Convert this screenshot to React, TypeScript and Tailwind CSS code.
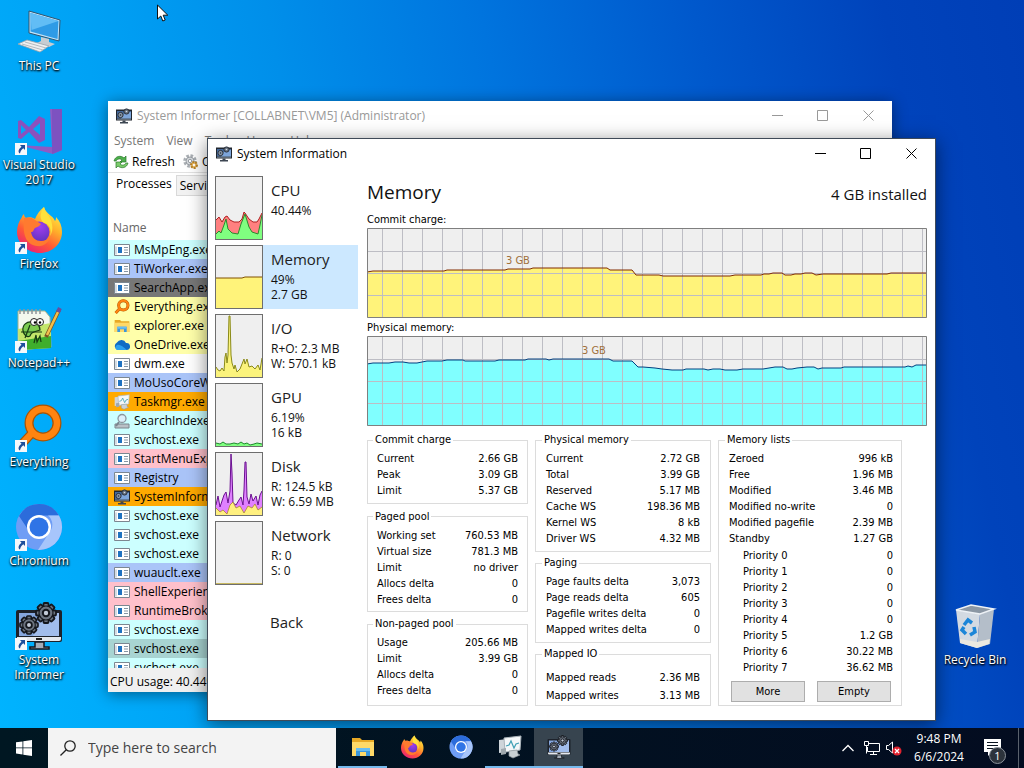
import type { ReactNode } from "react";

type Row = [label: string, value: string];

const PROCESSES = [
  { name: "MsMpEng.exe", bg: "bg-[#ccffff]", icon: "app" },
  { name: "TiWorker.exe", bg: "bg-[#aac4f8]", icon: "app" },
  { name: "SearchApp.exe", bg: "bg-[#777777]", icon: "app" },
  { name: "Everything.exe", bg: "bg-[#ffffaa]", icon: "everything" },
  { name: "explorer.exe", bg: "bg-[#ffffaa]", icon: "explorer" },
  { name: "OneDrive.exe", bg: "bg-[#ffffaa]", icon: "onedrive" },
  { name: "dwm.exe", bg: "bg-white", icon: "app" },
  { name: "MoUsoCoreWorker.exe", bg: "bg-[#aac4f8]", icon: "app" },
  { name: "Taskmgr.exe", bg: "bg-[#ffaa00]", icon: "taskmgr" },
  { name: "SearchIndexer.exe", bg: "bg-[#ccffff]", icon: "indexer" },
  { name: "svchost.exe", bg: "bg-[#ccffff]", icon: "app" },
  { name: "StartMenuExperience.exe", bg: "bg-[#ffc0cb]", icon: "app" },
  { name: "Registry", bg: "bg-[#aac4f8]", icon: "app" },
  { name: "SystemInformer.exe", bg: "bg-[#ffaa00]", icon: "informer" },
  { name: "svchost.exe", bg: "bg-[#ccffff]", icon: "app" },
  { name: "svchost.exe", bg: "bg-[#ccffff]", icon: "app" },
  { name: "svchost.exe", bg: "bg-[#ccffff]", icon: "app" },
  { name: "wuauclt.exe", bg: "bg-[#aac4f8]", icon: "app" },
  { name: "ShellExperienceHost.exe", bg: "bg-[#ffc0cb]", icon: "app" },
  { name: "RuntimeBroker.exe", bg: "bg-[#ffc0cb]", icon: "app" },
  { name: "svchost.exe", bg: "bg-[#ccffff]", icon: "app" },
  { name: "svchost.exe", bg: "bg-[#a8d4d2]", icon: "app" },
  { name: "svchost.exe", bg: "bg-[#ccffff]", icon: "app" },
];

const COMMIT: Row[] = [
  ["Current", "2.66 GB"],
  ["Peak", "3.09 GB"],
  ["Limit", "5.37 GB"],
];
const PAGED: Row[] = [
  ["Working set", "760.53 MB"],
  ["Virtual size", "781.3 MB"],
  ["Limit", "no driver"],
  ["Allocs delta", "0"],
  ["Frees delta", "0"],
];
const NON_PAGED: Row[] = [
  ["Usage", "205.66 MB"],
  ["Limit", "3.99 GB"],
  ["Allocs delta", "0"],
  ["Frees delta", "0"],
];
const PHYSICAL: Row[] = [
  ["Current", "2.72 GB"],
  ["Total", "3.99 GB"],
  ["Reserved", "5.17 MB"],
  ["Cache WS", "198.36 MB"],
  ["Kernel WS", "8 kB"],
  ["Driver WS", "4.32 MB"],
];
const PAGING: Row[] = [
  ["Page faults delta", "3,073"],
  ["Page reads delta", "605"],
  ["Pagefile writes delta", "0"],
  ["Mapped writes delta", "0"],
];
const MAPPED: Row[] = [
  ["Mapped reads", "2.36 MB"],
  ["Mapped writes", "3.13 MB"],
];
const LISTS: Row[] = [
  ["Zeroed", "996 kB"],
  ["Free", "1.96 MB"],
  ["Modified", "3.46 MB"],
  ["Modified no-write", "0"],
  ["Modified pagefile", "2.39 MB"],
  ["Standby", "1.27 GB"],
];
const PRIORITIES: Row[] = [
  ["Priority 0", "0"],
  ["Priority 1", "0"],
  ["Priority 2", "0"],
  ["Priority 3", "0"],
  ["Priority 4", "0"],
  ["Priority 5", "1.2 GB"],
  ["Priority 6", "30.22 MB"],
  ["Priority 7", "36.62 MB"],
];

const COMMIT_LINE =
  "0,44 6,43 77,43 80,42 138,42 141,41 163,41 166,40 240,40 243,42 265,42 269,47 292,47 296,48 363,48 368,47 394,47 397,46 402,46 406,45 415,45 418,47 424,47 428,46 434,46 438,45 445,45 449,47 456,46 520,46 524,45 560,45";
const PHYSICAL_LINE =
  "0,28 6,27 22,27 28,26 36,26 42,27 50,27 60,25 75,25 80,24 96,24 98,25 128,25 132,24 158,24 161,23 179,23 182,24 186,23 242,23 246,25 265,25 271,31 276,31 288,32 295,33 305,34 316,34 319,33 337,33 341,34 346,33 353,33 358,34 370,34 376,33 396,33 402,32 408,31 416,31 420,33 425,33 430,32 440,31 447,31 451,33 455,32 474,32 477,31 538,31 541,30 545,31 549,29 560,29";

function Gear({ x, y, r }: { x: number; y: number; r: number }) {
  return (
    <g transform={`translate(${x} ${y}) scale(${r / 10})`}>
      {[0, 45, 90, 135].map((a) => (
        <rect key={a} x="-2.500" y="-10" width="5" height="20" rx="1" fill="#6c7480" stroke="#14171d" strokeWidth="1.800" transform={`rotate(${a})`} />
      ))}
      <circle r="7" fill="#6c7480" stroke="#14171d" strokeWidth="1.200" />
      <circle r="3.200" fill="#c3cbd8" stroke="#14171d" strokeWidth="2" />
    </g>
  );
}

function SystemInformerIcon({ className }: { className?: string }) {
  return (
    <svg className={className} viewBox="0 0 48 48" aria-hidden="true">
      <path d="M20 40h9v5h5v2H15v-2h5z" fill="#a5adb8" stroke="#14181f" strokeWidth="1.500" />
      <rect x="1" y="8" width="46" height="32" rx="2" fill="#1d222b" />
      <rect x="4" y="11" width="40" height="23" fill="#86a7de" />
      <path d="M30 11h14v23H18z" fill="#a1bdec" />
      <path d="M2 35h44v2a2 2 0 0 1-2 2H4a2 2 0 0 1-2-2z" fill="#e4e8ee" />
      <path d="M21 37h6" stroke="#222" strokeWidth="2" />
      <Gear x={14} y={23} r={9} />
      <Gear x={31} y={11} r={10} />
    </svg>
  );
}

// simplified drawing used in title bars and list rows
function SystemInformerSmallIcon({ className }: { className?: string }) {
  return (
    <svg className={className} viewBox="0 0 16 16" aria-hidden="true">
      <path d="M0 1.500h16v11H0z" fill="#20262f" />
      <path d="M1 3h14v7.500H1z" fill="#466a9c" />
      <path d="M9 4h6v6.500H5z" fill="#7da5da" />
      <path d="M1 11.200h14" stroke="#7c8894" />
      <path d="M6.500 12.500h3V14H12v1.500H4V14h2.500z" fill="#3d4652" />
      <circle cx="4.500" cy="7" r="2.600" fill="#8d9bad" stroke="#2a313c" />
      <circle cx="4.500" cy="7" r="0.800" fill="#222a34" />
      <circle cx="10.500" cy="3.500" r="2.600" fill="#66717f" stroke="#2a313c" />
      <circle cx="10.500" cy="3.500" r="0.800" fill="#d4dbe4" />
    </svg>
  );
}

function FirefoxIcon({ className }: { className?: string }) {
  return (
    <svg className={className} viewBox="0 0 48 48" aria-hidden="true">
      <defs>
        <linearGradient id="fx-body" x1="0.800" y1="0" x2="0.200" y2="1">
          <stop offset="0" stopColor="#fff14a" />
          <stop offset="0.350" stopColor="#ffb02a" />
          <stop offset="0.650" stopColor="#ff5a36" />
          <stop offset="1" stopColor="#e8197e" />
        </linearGradient>
        <radialGradient id="fx-core" cx="0.550" cy="0.250" r="0.800">
          <stop offset="0" stopColor="#a03cf0" />
          <stop offset="1" stopColor="#5b33b8" />
        </radialGradient>
      </defs>
      <path
        d="M29 1c1 4 4 6 7 9 2 1 3 3 4 5 1-1 1-3 1-4 4 4 6 9 6 15 0 12-10 21-22 21S2 38 2 26c0-6 2-11 5-15 0-1 1-2 2-3 0 2 1 3 2 4 3-1 6-1 9 1 2-5 5-9 9-12z"
        fill="url(#fx-body)"
      />
      <circle cx="24" cy="26" r="10.500" fill="url(#fx-core)" />
      <path d="M9 12c4-1 8-1 11 2l6 4c-1 2-4 3-6 4-2 2-1 4-4 4 1 6 5 9 10 9 4 0 6-2 9-3-2 5-7 9-13 8C13 39 7 32 9 12z" fill="#ff7a2f" />
      <path d="M29 1c1 7 7 9 8 17 1 5 0 9-2 12 2-7-1-12-6-13-5-4-4-10 0-16z" fill="#ffe13c" />
    </svg>
  );
}

function ChromiumIcon({ className }: { className?: string }) {
  return (
    <svg className={className} viewBox="0 0 48 48" aria-hidden="true">
      <circle cx="24" cy="24" r="23" fill="#6f9df5" />
      <path d="M4 13A23 23 0 0 1 44 12.500H24a12 12 0 0 0-11 14z" fill="#2c6cdb" />
      <path d="M44 12.500A23 23 0 0 1 23 47l11-17a12 12 0 0 0-1-17.500z" fill="#a7c5fb" />
      <circle cx="24" cy="24" r="12" fill="#fff" />
      <circle cx="24" cy="24" r="9.500" fill="#2f74e6" />
    </svg>
  );
}

function EverythingIcon({ className }: { className?: string }) {
  return (
    <svg className={className} viewBox="0 0 48 48" aria-hidden="true">
      <path d="m18 28-13 14" stroke="#a85405" strokeWidth="9" />
      <circle cx="28" cy="19" r="14" fill="none" stroke="#a85405" strokeWidth="9" />
      <path d="m18 28-13 14" stroke="#ff8410" strokeWidth="6.500" />
      <circle cx="28" cy="19" r="14" fill="none" stroke="#ff8410" strokeWidth="6.500" />
    </svg>
  );
}

function FolderIcon({ className }: { className?: string }) {
  return (
    <svg className={className} viewBox="0 0 24 24" aria-hidden="true">
      <path d="M1 3h8l2 2h12v16H1z" fill="#e8a925" />
      <path d="M1 7h22v14H1z" fill="#ffd968" />
      <path d="M5 21v-8h14v8h-4v-4H9v4z" fill="#3b97dc" />
      <path d="M5 13h14v3H5z" fill="#68bdf2" />
    </svg>
  );
}

function TaskManagerIcon({ className }: { className?: string }) {
  return (
    <svg className={className} viewBox="0 0 24 24" aria-hidden="true">
      <path d="M1 5 17 3v13L1 18z" fill="#cfd5da" />
      <path d="m6 3 17-2-1 14-15 2z" fill="#f4f7f9" stroke="#aab3ba" />
      <path d="m8 11 3-1 2-4 3 7 2-4 3-1" fill="none" stroke="#3f9fb4" strokeWidth="1.200" />
      <path d="m11 16 8-1 1 4 2 1-7 3-4-2z" fill="#c9d0d5" stroke="#8e979e" strokeWidth="0.700" />
      <path d="m3 14 5-1v6l-5 1z" fill="#9fa8ae" />
    </svg>
  );
}

function ProcessIcon({ kind }: { kind: string }) {
  const cls = "size-4 shrink-0";
  if (kind === "everything") return <EverythingIcon className={cls} />;
  if (kind === "explorer") return <FolderIcon className={cls} />;
  if (kind === "taskmgr") return <TaskManagerIcon className={cls} />;
  if (kind === "informer") return <SystemInformerSmallIcon className={cls} />;
  if (kind === "onedrive") {
    return (
      <svg className={cls} viewBox="0 0 16 16" aria-hidden="true">
        <path d="M4 13a4 4 0 0 1-1-7.500A5 5 0 0 1 12 6a3.500 3.500 0 0 1 1 7z" fill="#0f6cc4" />
        <path d="M3 13c-2-1-2-4 0-5 3-1 6 2 10 5z" fill="#2ba0ee" />
      </svg>
    );
  }
  if (kind === "indexer") {
    return (
      <svg className={cls} viewBox="0 0 16 16" aria-hidden="true">
        <path d="M1 11h14v4H1z" fill="#b9c0c6" stroke="#7d868d" />
        <path d="m5 9-3 4" stroke="#7a858e" strokeWidth="2" />
        <circle cx="8" cy="5.500" r="4" fill="#dceffa" stroke="#8b969f" strokeWidth="1.300" />
      </svg>
    );
  }
  return (
    <svg className={cls} viewBox="0 0 16 16" aria-hidden="true">
      <path d="M0.500 2.500h15v11h-15z" fill="#fff" stroke="#7c8791" />
      <path d="M1 4.500h2v8H1z" fill="#d5dce2" />
      <path d="M4 5h4v6H4z" fill="#1f72c0" />
      <path d="M10 5.500h4M10 8h4M10 10.500h4" stroke="#8595a5" />
    </svg>
  );
}

function ThisPcIcon() {
  return (
    <svg className="size-12" viewBox="0 0 48 48" aria-hidden="true">
      <path d="m14 3 31 9-1 21-30-8z" fill="#bfe4fa" stroke="#30536e" />
      <path d="m15.500 5 28 8-1 18-27-7.500z" fill="#2e9be6" />
      <path d="m15.500 5 28 8-27 9z" fill="#62bdf5" />
      <path d="m26 29 8 2v3l6 2-6 3-12-4 4-2z" fill="#c7cdd2" />
      <path d="m3 36 9-4 22 6-9 6z" fill="#eef0f1" stroke="#9aa3aa" strokeWidth="0.800" />
      <path d="m7 36 21 6M10 34l21 6" stroke="#b4babf" />
    </svg>
  );
}

function VisualStudioIcon() {
  return (
    <svg className="size-12" viewBox="0 0 48 48" aria-hidden="true">
      <path d="M35 2h12v41l-9 4-35-9 34 2z" fill="#8e5bc4" />
      <path d="M37 2h10v41l-10 4z" fill="#7d52c0" />
      <path
        d="m3 14 3-1 8 7 10-11 6 3v21l-6 3-10-11-8 7-3-1V14zm3 4v9l5-4zM25 16l-7 6 7 6z"
        fill="#8a51bd"
        fillRule="evenodd"
      />
    </svg>
  );
}

function NotepadIcon() {
  return (
    <svg className="size-12" viewBox="0 0 48 48" aria-hidden="true">
      <path d="M3 6h27l5 6 1 30-33 3z" fill="#f4f8ee" stroke="#9fb08c" />
      <path d="M3 24 36 18v25L4 45z" fill="#c3e66a" />
      <path d="M3 36 36 31v12L4 45z" fill="#3fae2c" />
      <path d="M5 4v5M9 4v5M13 4v5M17 4v5M21 4v5M25 4v5" stroke="#8d949a" strokeWidth="1.500" />
      <path d="M8 26c-1-6 4-10 9-9 5 0 8 4 8 8-6 2-9 2-10 6-3 2-6-1-7-5z" fill="#7ccb52" stroke="#173b12" strokeWidth="1.200" />
      <path d="M6 27h21M15 20l-5 13M19 38l2-8 1 7 3-6 1 6" fill="none" stroke="#173b12" strokeWidth="1.200" />
      <circle cx="19" cy="17" r="3.500" fill="#fff" stroke="#222" />
      <circle cx="25" cy="17" r="3.500" fill="#fff" stroke="#222" />
      <circle cx="20" cy="17.500" r="1.200" />
      <circle cx="25" cy="17.500" r="1.200" />
      <path d="m31 32 13-27" stroke="#7a5420" strokeWidth="4" />
      <path d="m32 30 11-23" stroke="#f3bf4c" strokeWidth="2.500" />
      <path d="m43 7 2-4" stroke="#6b4c9e" strokeWidth="4" />
    </svg>
  );
}

function RecycleBinIcon() {
  return (
    <svg className="size-12" viewBox="0 0 48 48" aria-hidden="true">
      <path d="m5 8 24 4-3 34-17-5z" fill="#d3dae2" />
      <path d="m29 12 14-5-4 35-13 4z" fill="#b4bec9" />
      <path d="M5 8 20 3l23 4-14 5z" fill="#8b97a4" stroke="#eef2f6" strokeWidth="1.500" />
      <path d="m9 37 17 3 13-3-1 5-12 4-17-5z" fill="#ece9e0" />
      <g fill="none" stroke="#1c86d8" strokeWidth="3.500">
        <path d="m13 23 4-5 4 3" />
        <path d="m23 25 1 5-5 3" />
        <path d="m15 32-4-4 2-3" />
      </g>
    </svg>
  );
}

function ShortcutBadge() {
  return (
    <svg className="absolute bottom-0 left-0 size-3" viewBox="0 0 12 12" aria-hidden="true">
      <path d="M0 0h12v12H0z" fill="#f5f8fb" />
      <path d="M5 2h5v5L8.300 5.300C6 7 5.500 8.500 5 10.500 2.500 9 3.500 6 6.500 3.700z" fill="#1e4f9c" />
    </svg>
  );
}

function DesktopIcon({ label, shortcut = true, children }: { label: string; shortcut?: boolean; children: ReactNode }) {
  return (
    <button className="flex h-[99px] w-[78px] flex-col items-center pt-2">
      <span className="relative block size-12">
        {children}
        {shortcut && <ShortcutBadge />}
      </span>
      <span className="mt-0.5 text-center text-xs leading-[15px] text-white [text-shadow:1px_1px_2px_#000,0_1px_2px_#000]">
        {label}
      </span>
    </button>
  );
}

function CaptionButtons({ tone }: { tone: string }) {
  return (
    <div className={`flex pr-px ${tone}`}>
      <button aria-label="Minimize" className="grid h-[29px] w-[45px] place-items-center">
        <svg className="size-[11px]" viewBox="0 0 11 11" stroke="currentColor" fill="none" aria-hidden="true">
          <path d="M0 5.500h11" />
        </svg>
      </button>
      <button aria-label="Maximize" className="grid h-[29px] w-[45px] place-items-center">
        <svg className="size-[11px]" viewBox="0 0 11 11" stroke="currentColor" fill="none" aria-hidden="true">
          <path d="M0.500 0.500h10v10h-10z" />
        </svg>
      </button>
      <button aria-label="Close" className="grid h-[29px] w-[46px] place-items-center">
        <svg className="size-[11px]" viewBox="0 0 11 11" stroke="currentColor" fill="none" aria-hidden="true">
          <path d="m0.500 0.500 10 10M10.500 0.500l-10 10" />
        </svg>
      </button>
    </div>
  );
}

function ProcessWindow() {
  return (
    <section className="absolute left-[108px] top-[101px] flex h-[591px] w-[784px] flex-col bg-white shadow-[0_2px_14px_rgba(0,0,0,0.45)]">
      <header className="flex h-[29px] items-center text-xs text-[#999]">
        <SystemInformerSmallIcon className="ml-2 mr-[5px] size-4" />
        <span className="flex-1 whitespace-nowrap">System Informer [COLLABNET\VM5] (Administrator)</span>
        <CaptionButtons tone="text-[#999]" />
      </header>
      <nav className="flex h-[21px] items-center gap-3 pl-1.5 text-xs text-[#777]">
        <button>System</button>
        <button>View</button>
        <button>Tools</button>
        <button>Users</button>
        <button>Help</button>
      </nav>
      <div className="flex h-[22px] items-center border-b border-[#e2e2e2] pl-[5px] text-xs">
        <button className="flex items-center gap-[3px]">
          <svg className="size-4" viewBox="0 0 16 16" aria-hidden="true">
            <path d="M1 7c1-5 7-6 10-3l2-2v6H7l2-2C7 4 4 5 3 7z" fill="#4fb04d" stroke="#28792a" strokeWidth="0.700" />
            <path d="M15 9c-1 5-7 6-10 3l-2 2V8h6l-2 2c2 2 5 1 6-1z" fill="#7bcb6b" stroke="#28792a" strokeWidth="0.700" />
          </svg>
          Refresh
        </button>
        <button className="ml-2 flex items-center gap-[3px]">
          <svg className="size-4" viewBox="0 0 16 16" aria-hidden="true">
            <circle cx="7" cy="7" r="5" fill="none" stroke="#a9aeb3" strokeWidth="3.500" strokeDasharray="2.400 1.500" />
            <circle cx="7" cy="7" r="4" fill="#d7dadd" stroke="#999fa5" />
            <circle cx="7" cy="7" r="1.700" fill="#fff" stroke="#999fa5" />
            <circle cx="11" cy="11" r="3" fill="#e9b65a" stroke="#b98429" strokeDasharray="2 1" strokeWidth="2" />
            <circle cx="11" cy="11" r="1.200" fill="#fff" />
          </svg>
          Options
        </button>
      </div>
      <div className="flex h-[23px] items-start pl-1 text-xs">
        <button className="h-[22px] px-1">Processes</button>
        <button className="mt-0.5 h-[21px] border border-[#d9d9d9] bg-[#f2f2f2] px-[3px]">Services</button>
        <button className="mt-0.5 h-[21px] border border-[#d9d9d9] bg-[#f2f2f2] px-[3px]">Network</button>
      </div>
      <div className="min-h-0 flex-1 overflow-hidden">
        <table className="w-full border-collapse text-xs">
          <thead>
            <tr className="h-11">
              <th className="pb-0.5 pl-[5px] text-left align-bottom font-normal leading-5 text-[#666]">Name</th>
            </tr>
          </thead>
          <tbody>
            {PROCESSES.map((p, i) => (
              <tr key={i} className={p.bg}>
                <td className="p-0">
                  <div className="flex h-[19px] items-center gap-1 pl-1.5">
                    <ProcessIcon kind={p.icon} />
                    {p.name}
                  </div>
                </td>
              </tr>
            ))}
          </tbody>
        </table>
      </div>
      <footer className="flex h-6 shrink-0 items-end bg-[#f0f0f0] pb-0.5 pl-0.5 text-xs">CPU usage: 40.44%</footer>
    </section>
  );
}

function MiniGraph({ children }: { children?: ReactNode }) {
  return (
    <svg className="h-16 w-12 shrink-0 border border-[#6e6e6e] bg-[#efefef]" viewBox="0 0 46 62" aria-hidden="true">
      {children}
    </svg>
  );
}

function Section({ title, lines, active = false, children }: { title: string; lines: string[]; active?: boolean; children?: ReactNode }) {
  return (
    <button className={`flex h-16 w-full text-left ${active ? "bg-[#cce8ff]" : ""}`}>
      <MiniGraph>{children}</MiniGraph>
      <span className="flex flex-col whitespace-nowrap pl-2 pt-1 text-xs leading-[15px] text-[#111]">
        <span className="mb-0.5 text-[15px] leading-[21px] text-[#222]">{title}</span>
        {lines.map((l) => (
          <span key={l}>{l}</span>
        ))}
      </span>
    </button>
  );
}

function Sections() {
  const cpuTotal = "0,43 3,40 6,45 9,40 11,39 14,43 18,45 23,45 26,42 28,35 29,36 31,39 33,42 37,45 41,45 43,42 46,36";
  const cpuKernel = "0,57 3,54 5,56 8,48 10,42 12,52 16,56 22,57 25,47 29,37 33,50 36,55 42,57 44,48 46,38";
  const io = "0,52 2,55 4,56 6,53 8,56 9,42 10,38 11,48 12,40 13,1 14,1 15,40 16,48 18,54 19,50 21,57 24,54 26,49 28,44 29,49 31,44 33,52 36,51 39,54 42,50 44,55 46,43";
  const gpu = "0,59 4,60 7,58 10,60 14,60 18,59 22,60 25,58 28,60 31,59 34,61 38,60 41,59 46,60";
  const diskWrite = "0,52 2,43 4,54 8,42 10,39 12,50 14,38 15,1 16,20 17,50 20,52 23,47 25,44 27,52 28,37 29,9 30,9 31,44 33,51 35,41 37,48 40,43 42,52 44,42 46,38";
  const diskRead = "0,55 4,59 7,57 11,61 14,52 17,49 20,55 24,53 28,60 32,53 36,55 39,51 42,57 46,54";
  return (
    <nav aria-label="Sections" className="flex w-[143px] shrink-0 flex-col gap-[5px]">
      <Section title="CPU" lines={["40.44%"]}>
        <polygon points={`0,62 ${cpuTotal} 46,62`} fill="#ff8080" />
        <polyline points={cpuTotal} fill="none" stroke="#b02020" />
        <polygon points={`0,62 ${cpuKernel} 46,62`} fill="#80ff80" />
        <polyline points={cpuKernel} fill="none" stroke="#2d8a2d" />
      </Section>
      <Section title="Memory" lines={["49%", "2.7 GB"]} active>
        <path d="M0 32h26l3-1h17v31H0z" fill="#fff37a" />
        <path d="M0 32h26l3-1h17" fill="none" stroke="#805000" />
      </Section>
      <Section title="I/O" lines={["R+O: 2.3 MB", "W: 570.1 kB"]}>
        <polygon points={`0,62 ${io} 46,62`} fill="#fbf37c" />
        <polyline points={io} fill="none" stroke="#8a8a18" />
      </Section>
      <Section title="GPU" lines={["6.19%", "16 kB"]}>
        <polygon points={`0,62 ${gpu} 46,62`} fill="#80ff80" />
        <polyline points={gpu} fill="none" stroke="#1d8a2d" />
      </Section>
      <Section title="Disk" lines={["R: 124.5 kB", "W: 6.59 MB"]}>
        <polygon points={`0,62 ${diskWrite} 46,62`} fill="#e080ff" />
        <polyline points={diskWrite} fill="none" stroke="#6a1090" />
        <polygon points={`0,62 ${diskRead} 46,62`} fill="#fff080" />
        <polyline points={diskRead} fill="none" stroke="#a08020" strokeWidth="0.700" />
      </Section>
      <Section title="Network" lines={["R: 0", "S: 0"]}>
        <path d="M0 61.500h46" stroke="#c8b860" />
      </Section>
      <button className="mt-[22px] pl-[55px] text-left text-[15px] leading-5 text-[#222]">Back</button>
    </nav>
  );
}

interface HistoryGraphProps {
  line: string;
  fill: string;
  stroke: string;
  labelX: number;
  labelY: number;
}

function HistoryGraph({ line, fill, stroke, labelX, labelY }: HistoryGraphProps) {
  const columns = Array.from({ length: 28 }, (_, i) => 15 + i * 20);
  return (
    <svg className="block h-[90px] w-full" viewBox="0 0 560 90" preserveAspectRatio="none" role="img" aria-label="History graph">
      <path d="M0 0h560v90H0z" fill="#efefef" />
      <polygon points={`0,90 ${line} 560,90`} fill={fill} />
      <g stroke="#bdbdc4" shapeRendering="crispEdges">
        {columns.map((x) => (
          <line key={x} x1={x + 0.5} x2={x + 0.5} y1="0" y2="90" />
        ))}
        {[23, 45, 67].map((y) => (
          <line key={y} x1="0" x2="560" y1={y + 0.5} y2={y + 0.5} />
        ))}
      </g>
      <polyline points={line} fill="none" stroke={stroke} />
      <text x={labelX} y={labelY} fontSize="11" fill="#a0703c" className="font-['DejaVu_Sans_Condensed','Noto_Sans',sans-serif]">
        3 GB
      </text>
      <path d="M0.500 0.500h559v89H0.500z" fill="none" stroke="#7f7f7f" />
    </svg>
  );
}

function Rows({ rows, size = "h-4", indent = "" }: { rows: Row[]; size?: string; indent?: string }) {
  return (
    <dl className={indent}>
      {rows.map(([label, value]) => (
        <div key={label} className={`flex items-center justify-between whitespace-nowrap ${size}`}>
          <dt>{label}</dt>
          <dd>{value}</dd>
        </div>
      ))}
    </dl>
  );
}

function Group({ title, className, children }: { title: string; className: string; children: ReactNode }) {
  return (
    <fieldset className={`border border-[#dcdcdc] pt-[5px] ${className}`}>
      <legend className="-ml-1 px-0.5 leading-3">{title}</legend>
      {children}
    </fieldset>
  );
}

const PUSH_BUTTON = "h-[21px] w-[74px] border border-[#adadad] bg-[#e1e1e1] text-center leading-4";

function MemoryPanel() {
  return (
    <main className="min-w-0 flex-1 text-[11px] text-black font-['DejaVu_Sans_Condensed','Noto_Sans',sans-serif]">
      <div className="flex h-9 items-start justify-between text-[#111] font-['Open_Sans','Noto_Sans',sans-serif]">
        <h1 className="text-[19px] leading-8">Memory</h1>
        <span className="pt-1 text-[15px] leading-7">4 GB installed</span>
      </div>
      <p className="h-4 leading-4">Commit charge:</p>
      <HistoryGraph line={COMMIT_LINE} fill="#fff37a" stroke="#802b00" labelX={139} labelY={36} />
      <p className="h-[18px] leading-5">Physical memory:</p>
      <HistoryGraph line={PHYSICAL_LINE} fill="#80ffff" stroke="#004080" labelX={215} labelY={18} />
      <div className="mt-2 grid h-[272px] grid-cols-[161px_176px_184px] gap-[7px]">
        <div className="flex flex-col justify-between">
          <Group title="Commit charge" className="px-[9px] pb-1">
            <Rows rows={COMMIT} />
          </Group>
          <Group title="Paged pool" className="px-[9px] pb-[3px]">
            <Rows rows={PAGED} />
          </Group>
          <Group title="Non-paged pool" className="px-[9px] pb-1.5">
            <Rows rows={NON_PAGED} />
          </Group>
        </div>
        <div className="flex flex-col justify-between">
          <Group title="Physical memory" className="px-2.5 pb-1">
            <Rows rows={PHYSICAL} />
          </Group>
          <Group title="Paging" className="px-2.5 pb-1">
            <Rows rows={PAGING} />
          </Group>
          <Group title="Mapped IO" className="px-2.5 pb-0">
            <div className="pt-1">
              <Rows rows={MAPPED} size="h-[18px]" />
            </div>
          </Group>
        </div>
        <Group title="Memory lists" className="pb-0 pl-2.5 pr-2">
          <Rows rows={LISTS} />
          <Rows rows={PRIORITIES} indent="pl-3.5 pt-px" />
          <div className="mt-[5px] flex gap-3 pl-0.5">
            <button className={PUSH_BUTTON}>More</button>
            <button className={PUSH_BUTTON}>Empty</button>
          </div>
        </Group>
      </div>
    </main>
  );
}

function SystemInformationWindow() {
  return (
    <section className="absolute left-[207px] top-[138px] w-[729px] border border-[#3f4a58] bg-white shadow-[0_4px_18px_rgba(0,0,0,0.5)]">
      <header className="flex h-[29px] items-center text-xs">
        <SystemInformerSmallIcon className="ml-2 mr-[5px] size-4" />
        <span className="flex-1">System Information</span>
        <CaptionButtons tone="text-black" />
      </header>
      <div className="flex gap-[9px] pb-3.5 pl-[7px] pr-2 pt-2">
        <Sections />
        <MemoryPanel />
      </div>
    </section>
  );
}

function TaskButton({ label, state = "", children }: { label: string; state?: string; children: ReactNode }) {
  return (
    <button aria-label={label} className={`grid h-10 w-[49px] place-items-center border-b-2 ${state || "border-transparent"}`}>
      {children}
    </button>
  );
}

function Taskbar() {
  return (
    <footer className="absolute inset-x-0 bottom-0 flex h-10 items-center bg-linear-to-r from-[#001722] to-[#030c20] text-white">
      <button aria-label="Start" className="grid h-10 w-12 place-items-center">
        <svg className="size-4" viewBox="0 0 16 16" fill="#fff" aria-hidden="true">
          <path d="M0 2.300 6.500 1.400v6.100H0zM7.300 1.300 16 0v7.500H7.300zM0 8.300h6.500v6.200L0 13.600zM7.300 8.300H16V16l-8.700-1.300z" />
        </svg>
      </button>
      <label className="flex h-10 w-72 items-center bg-[#f3f3f3] text-[#444]">
        <svg className="ml-3 size-4 shrink-0" viewBox="0 0 16 16" fill="none" stroke="#222" strokeWidth="1.300" aria-hidden="true">
          <circle cx="10" cy="6" r="5.200" />
          <path d="M6.300 9.700 0.500 15.500" />
        </svg>
        <input
          type="text"
          aria-label="Search"
          placeholder="Type here to search"
          className="ml-3 min-w-0 flex-1 bg-transparent text-sm outline-none placeholder:text-[#444]"
        />
      </label>
      <div className="flex pl-0.5">
        <TaskButton label="File Explorer" state="border-[#76b9ed]">
          <FolderIcon className="size-6" />
        </TaskButton>
        <TaskButton label="Firefox">
          <FirefoxIcon className="size-6" />
        </TaskButton>
        <TaskButton label="Chromium">
          <ChromiumIcon className="size-6" />
        </TaskButton>
        <TaskButton label="Task Manager" state="border-[#76b9ed]">
          <TaskManagerIcon className="size-6" />
        </TaskButton>
        <TaskButton label="System Informer" state="border-[#76b9ed] bg-[#37444f]">
          <SystemInformerIcon className="size-6" />
        </TaskButton>
      </div>
      <div className="ml-auto flex items-center">
        <button aria-label="Show hidden icons" className="px-1.5">
          <svg className="h-2 w-3" viewBox="0 0 12 8" fill="none" stroke="#fff" strokeWidth="1.300" aria-hidden="true">
            <path d="m0.500 7 5.500-5.500L11.500 7" />
          </svg>
        </button>
        <button aria-label="Network" className="px-1">
          <svg className="size-4" viewBox="0 0 16 16" fill="none" stroke="#fff" aria-hidden="true">
            <path d="M5 3.500h10.500v8H3.500V7M9.500 11.500v3M6 14.500h7M0.500 1.500h4v4h-4zM2.500 5.500v8" />
          </svg>
        </button>
        <button aria-label="Volume muted" className="px-0.5">
          <svg className="size-4" viewBox="0 0 16 16" aria-hidden="true">
            <path d="M0.500 5.500h2l4-3.500v11l-4-3.500h-2z" fill="none" stroke="#fff" />
            <circle cx="11" cy="11" r="4.500" fill="#e0222e" />
            <path d="m9 9 4 4M13 9l-4 4" stroke="#fff" strokeWidth="1.300" />
          </svg>
        </button>
        <time className="w-[70px] text-center text-xs leading-[18px]">
          9:48 PM
          <br />
          6/6/2024
        </time>
        <button aria-label="Notifications" className="relative ml-2 mr-3 size-6">
          <svg className="size-6" viewBox="0 0 24 24" aria-hidden="true">
            <path d="M2 3h17v13h-9l-4 4v-4H2z" fill="#fff" />
            <path d="M5 6.500h11M5 9.500h11M5 12.500h7" stroke="#0a1420" />
          </svg>
          <span className="absolute -bottom-1 right-0 grid size-[17px] place-items-center rounded-full border border-[#8b929a] bg-[#2c333c] text-[11px]">
            1
          </span>
        </button>
        <span className="h-10 w-1.5 border-l border-[#59616d]" />
      </div>
    </footer>
  );
}

export default function App() {
  return (
    <div className="relative h-screen w-full select-none overflow-hidden bg-[linear-gradient(78deg,#00b4ff_0%,#00a2f5_20%,#008fea_36%,#0074de_54%,#0058cc_72%,#0043bb_88%,#003eb6_100%)] font-['Open_Sans','Noto_Sans',sans-serif] leading-4">
      <div className="absolute left-0 top-0 flex flex-col">
        <DesktopIcon label="This PC" shortcut={false}>
          <ThisPcIcon />
        </DesktopIcon>
        <DesktopIcon label="Visual Studio 2017">
          <VisualStudioIcon />
        </DesktopIcon>
        <DesktopIcon label="Firefox">
          <FirefoxIcon className="size-12" />
        </DesktopIcon>
        <DesktopIcon label="Notepad++">
          <NotepadIcon />
        </DesktopIcon>
        <DesktopIcon label="Everything">
          <EverythingIcon className="size-12" />
        </DesktopIcon>
        <DesktopIcon label="Chromium">
          <ChromiumIcon className="size-12" />
        </DesktopIcon>
        <DesktopIcon label="System Informer">
          <SystemInformerIcon className="size-12" />
        </DesktopIcon>
      </div>
      <div className="absolute bottom-[75px] right-2.5">
        <DesktopIcon label="Recycle Bin" shortcut={false}>
          <RecycleBinIcon />
        </DesktopIcon>
      </div>

      <ProcessWindow />
      <SystemInformationWindow />
      <Taskbar />

      <svg className="absolute left-[157px] top-1 h-[18px] w-3" viewBox="0 0 12 18" aria-hidden="true">
        <path d="M0.500 1v14l3.300-3 2 5 2.400-1-2-4.800h4.600z" fill="#fff" stroke="#111" />
      </svg>
    </div>
  );
}
